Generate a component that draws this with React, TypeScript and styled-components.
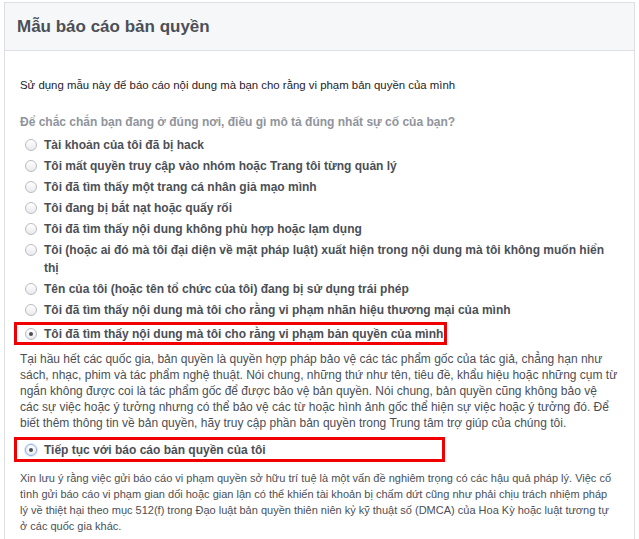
import React, { useState } from "react";
import styled, { createGlobalStyle } from "styled-components";

const GlobalStyle = createGlobalStyle`
  html, body {
    margin: 0;
    padding: 0;
    background: #fff;
  }
  body {
    font-family: "Liberation Sans", Arial, Helvetica, sans-serif;
    color: #1d2129;
    -webkit-font-smoothing: antialiased;
  }
`;

const Page = styled.div`
  padding: 2px 4px 0 4px;
  height: 537px;
  overflow: hidden;
`;

const Panel = styled.div`
  width: 629px;
  border: 1px solid #dddfe2;
  border-bottom: none;
  min-height: 560px;
`;

const Header = styled.div`
  height: 47px;
  background: #f6f7f9;
  border-bottom: 1px solid #dddfe2;
  display: flex;
  align-items: center;
  padding: 0 12px;
`;

const Title = styled.h1`
  margin: 0;
  font-size: 17px;
  font-weight: bold;
  color: #4b4f56;
  line-height: 20px;
`;

const Body = styled.div`
  padding: 26px 15px 0 15px;
`;

const Intro = styled.p`
  margin: 0;
  font-size: 11.4px;
  line-height: 16px;
  color: #1d2129;
`;

const Question = styled.div`
  margin-top: 20px;
  font-size: 12px;
  font-weight: bold;
  line-height: 18px;
  color: #90949c;
`;

const OptionList = styled.div`
  margin-top: 5px;
  display: flex;
  flex-direction: column;
  gap: 3px;
`;

const Row = styled.label`
  display: flex;
  align-items: flex-start;
  gap: 7px;
  padding-left: 5px;
  font-size: 12px;
  font-weight: bold;
  line-height: 18px;
  color: #4b4f56;
  cursor: pointer;
`;

const RowText = styled.span`
  max-width: 570px;
`;

const Highlight = styled.div<{ $width: number; $height: number; $gap?: number }>`
  width: ${(p) => p.$width}px;
  height: ${(p) => p.$height}px;
  margin: ${(p) => p.$gap ?? 0}px 0 0 -6px;
  border: 3px solid #f00000;
  padding: 0 0 0 3px;
  box-sizing: border-box;
  display: flex;
  align-items: center;
`;

const Radio = styled.span<{ $checked: boolean; $focus?: boolean }>`
  flex: none;
  width: 12px;
  height: 12px;
  margin-top: 3px;
  border-radius: 50%;
  box-sizing: border-box;
  border: 1px solid ${(p) => (p.$focus ? "#8fb0e6" : "#b8bcc2")};
  background: linear-gradient(#ffffff, #e9eaec);
  display: flex;
  align-items: center;
  justify-content: center;
  box-shadow: ${(p) => (p.$focus ? "0 0 0 1px #dbe6f8" : "none")};

  &::after {
    content: "";
    width: 4px;
    height: 4px;
    border-radius: 50%;
    background: ${(p) => (p.$checked ? "#4b4f56" : "transparent")};
  }
`;

const Lines = styled.p<{ $size: number; $gap: number }>`
  margin: ${(p) => p.$gap}px 0 0 0;
  font-size: ${(p) => p.$size}px;
  line-height: 16px;
  color: #4b4f56;
  white-space: nowrap;
`;

const Line = styled.span`
  display: block;
`;

const options = [
  "Tài khoản của tôi đã bị hack",
  "Tôi mất quyền truy cập vào nhóm hoặc Trang tôi từng quản lý",
  "Tôi đã tìm thấy một trang cá nhân giả mạo mình",
  "Tôi đang bị bắt nạt hoặc quấy rối",
  "Tôi đã tìm thấy nội dung không phù hợp hoặc lạm dụng",
  "Tôi (hoặc ai đó mà tôi đại diện về mặt pháp luật) xuất hiện trong nội dung mà tôi không muốn hiển thị",
  "Tên của tôi (hoặc tên tổ chức của tôi) đang bị sử dụng trái phép",
  "Tôi đã tìm thấy nội dung mà tôi cho rằng vi phạm nhãn hiệu thương mại của mình",
  "Tôi đã tìm thấy nội dung mà tôi cho rằng vi phạm bản quyền của mình",
];

const aboutCopyright = [
  "Tại hầu hết các quốc gia, bản quyền là quyền hợp pháp bảo vệ các tác phẩm gốc của tác giả, chẳng hạn như",
  "sách, nhạc, phim và tác phẩm nghệ thuật. Nói chung, những thứ như tên, tiêu đề, khẩu hiệu hoặc những cụm từ",
  "ngắn không được coi là tác phẩm gốc để được bảo vệ bản quyền. Nói chung, bản quyền cũng không bảo vệ",
  "các sự việc hoặc ý tưởng nhưng có thể bảo vệ các từ hoặc hình ảnh gốc thể hiện sự việc hoặc ý tưởng đó. Để",
  "biết thêm thông tin về bản quyền, hãy truy cập phần bản quyền trong Trung tâm trợ giúp của chúng tôi.",
];

const warning = [
  "Xin lưu ý rằng việc gửi báo cáo vi phạm quyền sở hữu trí tuệ là một vấn đề nghiêm trọng có các hậu quả pháp lý. Việc cố",
  "tình gửi báo cáo vi phạm gian dối hoặc gian lận có thể khiến tài khoản bị chấm dứt cũng như phải chịu trách nhiệm pháp",
  "lý về thiệt hại theo mục 512(f) trong Đạo luật bản quyền thiên niên kỷ kỹ thuật số (DMCA) của Hoa Kỳ hoặc luật tương tự",
  "ở các quốc gia khác.",
];

const App = () => {
  const [selected, setSelected] = useState(options.length - 1);

  return (
    <>
      <GlobalStyle />
      <Page>
        <Panel>
          <Header>
            <Title>Mẫu báo cáo bản quyền</Title>
          </Header>
          <Body>
            <Intro>Sử dụng mẫu này để báo cáo nội dung mà bạn cho rằng vi phạm bản quyền của mình</Intro>
            <Question>Để chắc chắn bạn đang ở đúng nơi, điều gì mô tả đúng nhất sự cố của bạn?</Question>
            <OptionList>
              {options.map((text, i) => {
                const row = (
                  <Row key={text} onClick={() => setSelected(i)}>
                    <Radio $checked={selected === i} />
                    <RowText>{text}</RowText>
                  </Row>
                );
                return i === options.length - 1 ? (
                  <Highlight key={text} $width={433} $height={23}>
                    {row}
                  </Highlight>
                ) : (
                  row
                );
              })}
            </OptionList>
            <Lines $size={12} $gap={6}>
              {aboutCopyright.map((l) => (
                <Line key={l}>{l}</Line>
              ))}
            </Lines>
            <Highlight $width={431} $height={25} $gap={6}>
              <Row>
                <Radio $checked $focus />
                <RowText>Tiếp tục với báo cáo bản quyền của tôi</RowText>
              </Row>
            </Highlight>
            <Lines $size={11} $gap={8}>
              {warning.map((l) => (
                <Line key={l}>{l}</Line>
              ))}
            </Lines>
          </Body>
        </Panel>
      </Page>
    </>
  );
};

export default App;
